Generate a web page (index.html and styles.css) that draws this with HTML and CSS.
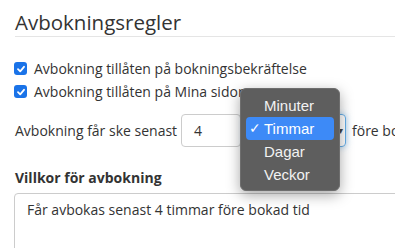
FILE: index.html
```html
<!DOCTYPE html>
<html lang="sv">
<head>
<meta charset="utf-8">
<link rel="stylesheet" href="styles.css">
</head>
<body>
<div class="page">
  <h2 class="title">Avbokningsregler</h2>
  <label class="check"><span class="box"><svg width="10" height="10" viewBox="0 0 10 10"><path d="M2 5.2 L4.2 7.3 L8 2.8" fill="none" stroke="#fff" stroke-width="1.8" stroke-linecap="round" stroke-linejoin="round"/></svg></span>Avbokning tillåten på bokningsbekräftelse</label>
  <label class="check"><span class="box"><svg width="10" height="10" viewBox="0 0 10 10"><path d="M2 5.2 L4.2 7.3 L8 2.8" fill="none" stroke="#fff" stroke-width="1.8" stroke-linecap="round" stroke-linejoin="round"/></svg></span>Avbokning tillåten på Mina sidor</label>
  <div class="row">
    <span class="lbl">Avbokning får ske senast</span>
    <div class="num">4</div>
    <div class="sel"><span class="chev">&#x25BE;</span></div>
    <span class="after">före bokad tid</span>
    <div class="menu">
      <div class="opt">Minuter</div>
      <div class="opt active"><span class="tick">✓</span>Timmar</div>
      <div class="opt">Dagar</div>
      <div class="opt">Veckor</div>
    </div>
  </div>
  <div class="subhead">Villkor för avbokning</div>
  <div class="area">Får avbokas senast 4 timmar före bokad tid</div>
</div>
</body>
</html>
```
FILE: styles.css
```css
html, body { margin: 0; padding: 0; background: #fff; overflow: hidden; }
body { width: 395px; height: 248px; font-family: "Open Sans", sans-serif; color: #333; }
.page { padding: 0 0 0 15px; }
.title {
  margin: 0;
  padding-top: 8px;
  height: 28px;
  font-size: 20.5px;
  font-weight: 400;
  line-height: 28px;
  color: #333;
  border-bottom: 1px solid #e5e5e5;
  white-space: nowrap;
}
.check {
  display: flex;
  align-items: center;
  height: 23px;
  font-size: 14px;
  white-space: nowrap;
  margin-left: -1px;
}
.check:first-of-type { margin-top: 20px; }
.box {
  flex-shrink: 0;
  width: 13px; height: 13px;
  background: #1a73e8;
  border-radius: 3px;
  display: inline-flex;
  align-items: center;
  justify-content: center;
  margin-right: 7px;
}
.box svg { display: block; }
.row {
  position: relative;
  display: flex;
  align-items: center;
  margin-top: 11px;
  height: 33px;
  font-size: 14px;
  white-space: nowrap;
}
.row > * { flex-shrink: 0; }
.lbl { width: 166px; }
.num {
  box-sizing: border-box;
  width: 60px; height: 33px;
  border: 1px solid #ccc;
  border-radius: 4px;
  padding-left: 12px;
  line-height: 31px;
}
.sel {
  box-sizing: border-box;
  margin-left: 3px;
  width: 102px; height: 33px;
  border: 1px solid #66afe9;
  border-radius: 4px;
  box-shadow: 0 0 6px rgba(102,175,233,0.6);
  position: relative;
}
.chev {
  position: absolute;
  right: 2px; top: 8px;
  font-size: 10px;
  color: #444;
}
.after { margin-left: 6px; }
.menu {
  position: absolute;
  left: 225px; top: -26px;
  width: 100px;
  box-sizing: border-box;
  padding: 5px 5px 4px;
  background: #5e5e5e;
  border: 1px solid #6e6e6e;
  border-radius: 6px;
  box-shadow: 0 4px 14px rgba(0,0,0,0.35);
  font-family: "Helvetica Neue", "Liberation Sans", Arial, sans-serif;
  font-size: 15px;
  color: #f2f2f2;
}
.opt {
  height: 23px;
  line-height: 23px;
  padding-left: 18px;
  position: relative;
  border-radius: 4px;
}
.opt.active { background: #3d8af7; color: #fff; }
.tick { position: absolute; left: 3px; top: 0; font-size: 14px; }
.subhead {
  margin-top: 21px;
  font-size: 14px;
  font-weight: 700;
  height: 20px;
  line-height: 20px;
}
.area {
  box-sizing: border-box;
  margin-top: 5px;
  margin-left: -1px;
  width: 400px;
  height: 70px;
  border: 1px solid #ccc;
  border-radius: 4px;
  padding: 6px 12px;
  font-size: 14px;
  line-height: 20px;
  white-space: nowrap;
}
```
